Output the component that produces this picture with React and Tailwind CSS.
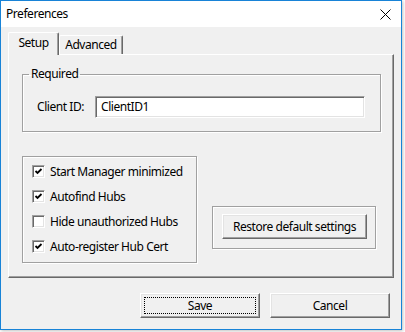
import React from 'react'

const raised =
  'border border-t-white border-l-white border-r-[#696969] border-b-[#696969] bg-[#f0f0f0] shadow-[inset_-1px_-1px_0_#a0a0a0,inset_1px_1px_0_#e3e3e3]'

function Check({ checked, label }) {
  return (
    <div className="flex h-[25px] items-center">
      <span className="flex h-[13px] w-[13px] items-center justify-center border border-t-[#a0a0a0] border-l-[#a0a0a0] border-r-white border-b-white bg-white shadow-[inset_1px_1px_0_#696969,inset_-1px_-1px_0_#e3e3e3]">
        {checked && (
          <svg width="9" height="9" viewBox="0 0 9 9">
            <path d="M1.5 4 L3.5 6 L7.5 2" fill="none" stroke="#000" strokeWidth="1.8" />
          </svg>
        )}
      </span>
      <span className="ml-[5px]">{label}</span>
    </div>
  )
}

export default function App() {
  return (
    <div className="h-[332px] w-[405px] bg-white font-['Noto_Sans',sans-serif] text-[12px] leading-[16px] tracking-[-0.45px] text-black">
      <div className="flex h-[330px] w-[402px] flex-col border border-[#1883d7] bg-[#f0f0f0] shadow-[1px_1px_3px_rgba(0,0,0,0.25)]">
        {/* title bar */}
        <div className="flex h-[26px] items-center justify-between bg-white pl-[5px] pr-[10px]">
          <span>Preferences</span>
          <svg width="11" height="11" viewBox="0 0 11 11">
            <path d="M0.5 0.5 L10.5 10.5 M10.5 0.5 L0.5 10.5" stroke="#000" strokeWidth="1" />
          </svg>
        </div>

        {/* tabs */}
        <div className="ml-[7px] flex h-[27px] items-end">
          <div className="relative z-10 -mb-px flex h-[23px] w-[51px] items-center justify-center rounded-t-[2px] border border-b-0 border-t-white border-l-white border-r-[#696969] bg-[#f0f0f0] pb-[3px] shadow-[inset_-1px_0_0_#a0a0a0]">
            Setup
          </div>
          <div className="flex h-[19px] w-[64px] items-center justify-center rounded-t-[2px] border border-b-0 border-t-white border-l-white border-r-[#696969] bg-[#f0f0f0] shadow-[inset_-1px_0_0_#a0a0a0]">
            Advanced
          </div>
        </div>

        {/* panel */}
        <div className="mx-[7px] h-[224px] border border-t-white border-l-white border-r-[#696969] border-b-[#696969] pl-[13px] pt-[11px] shadow-[inset_-1px_-1px_0_#a0a0a0]">
          <fieldset className="w-[359px] border border-[#a0a0a0] pb-[13px] shadow-[inset_1px_1px_0_#fff,1px_1px_0_#fff]">
            <legend className="ml-[6px] px-[2px] leading-[16px]">Required</legend>
            <div className="mt-[14px] flex items-center pl-[14px]">
              <span className="w-[58px]">Client ID:</span>
              <div className="flex h-[22px] w-[270px] items-center border border-t-[#a0a0a0] border-l-[#a0a0a0] border-r-white border-b-white bg-white px-[5px] shadow-[inset_1px_1px_0_#696969,inset_-1px_-1px_0_#e3e3e3]">
                ClientID1
              </div>
            </div>
          </fieldset>

          <div className="mt-[24px] flex items-start">
            <div className="h-[107px] w-[175px] border border-[#a0a0a0] pl-[9px] pt-[2px] shadow-[inset_1px_1px_0_#fff,1px_1px_0_#fff]">
              <Check checked label="Start Manager minimized" />
              <Check checked label="Autofind Hubs" />
              <Check label="Hide unauthorized Hubs" />
              <Check checked label="Auto-register Hub Cert" />
            </div>
            <div className="ml-[15px] mt-[50px] h-[43px] w-[164px] border border-[#a0a0a0] pl-[9px] pt-[7px] shadow-[inset_1px_1px_0_#fff,1px_1px_0_#fff]">
              <div className={`flex h-[25px] w-[145px] items-center justify-center ${raised}`}>
                Restore default settings
              </div>
            </div>
          </div>
        </div>

        {/* buttons */}
        <div className="mt-[15px] flex justify-end gap-[10px] pr-[11px]">
          <div className={`flex h-[25px] w-[120px] p-[3px] ${raised}`}>
            <div className="flex flex-1 items-center justify-center border border-dotted border-black">Save</div>
          </div>
          <div className={`flex h-[25px] w-[120px] items-center justify-center ${raised}`}>Cancel</div>
        </div>
      </div>
    </div>
  )
}
